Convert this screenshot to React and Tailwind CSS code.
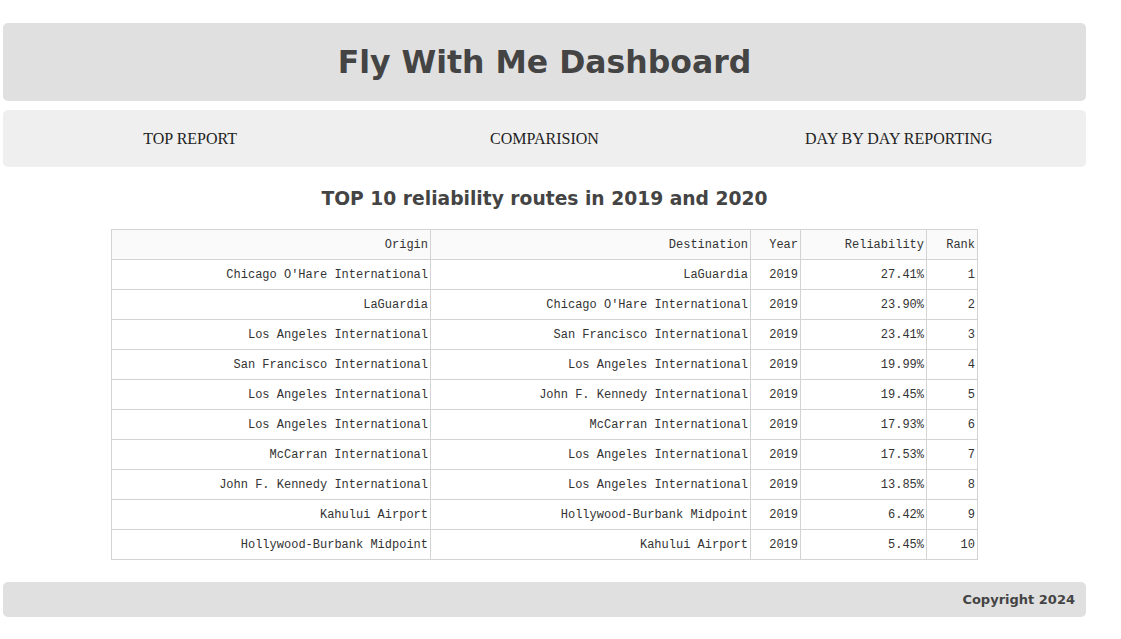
import React from "react";

const rows = [
  ["Chicago O'Hare International", "LaGuardia", "2019", "27.41%", "1"],
  ["LaGuardia", "Chicago O'Hare International", "2019", "23.90%", "2"],
  ["Los Angeles International", "San Francisco International", "2019", "23.41%", "3"],
  ["San Francisco International", "Los Angeles International", "2019", "19.99%", "4"],
  ["Los Angeles International", "John F. Kennedy International", "2019", "19.45%", "5"],
  ["Los Angeles International", "McCarran International", "2019", "17.93%", "6"],
  ["McCarran International", "Los Angeles International", "2019", "17.53%", "7"],
  ["John F. Kennedy International", "Los Angeles International", "2019", "13.85%", "8"],
  ["Kahului Airport", "Hollywood-Burbank Midpoint", "2019", "6.42%", "9"],
  ["Hollywood-Burbank Midpoint", "Kahului Airport", "2019", "5.45%", "10"],
];

const cols = [
  { name: "Origin", w: "w-[319px]" },
  { name: "Destination", w: "w-[320px]" },
  { name: "Year", w: "w-[50px]" },
  { name: "Reliability", w: "w-[126px]" },
  { name: "Rank", w: "w-[51px]" },
];

export default function App() {
  return (
    <div className="bg-white min-h-[639px] pt-[23px] font-['DejaVu_Sans',Verdana,sans-serif]">
      <div className="ml-[3px] w-[1083px]">
        <div className="h-[78px] bg-[#e0e0e0] rounded-[5px] flex items-center justify-center pt-[2px]">
          <h1 className="text-[31.5px] font-bold text-[#444]">Fly With Me Dashboard</h1>
        </div>

        <div className="mt-[9px] h-[57px] bg-[#efefef] rounded-[5px] px-[10px] grid grid-cols-3 items-center font-['Liberation_Serif',serif] text-[16px] text-[#222]">
          <span className="text-center">TOP REPORT</span>
          <span className="text-center">COMPARISION</span>
          <span className="text-center">DAY BY DAY REPORTING</span>
        </div>

        <h2 className="mt-[19px] text-center text-[18.7px] font-bold text-[#444] leading-[26px]">
          TOP 10 reliability routes in 2019 and 2020
        </h2>

        <div className="mt-[17px]">
          <table className="ml-[108px] table-fixed border-collapse font-['Liberation_Mono',monospace] text-[12px] text-[#333]">
            <thead>
              <tr className="bg-[#fafafa]">
                {cols.map((c) => (
                  <th key={c.name} className={`${c.w} h-[30px] border border-[#d3d3d3] px-[2px] pt-[1px] text-right font-normal`}>
                    {c.name}
                  </th>
                ))}
              </tr>
            </thead>
            <tbody>
              {rows.map((r) => (
                <tr key={r[4]}>
                  {r.map((v, i) => (
                    <td key={i} className="h-[30px] border border-[#d3d3d3] px-[2px] pt-[1px] text-right">
                      {v}
                    </td>
                  ))}
                </tr>
              ))}
            </tbody>
          </table>
        </div>

        <div className="mt-[22px] h-[35px] bg-[#e0e0e0] rounded-[5px] flex items-center justify-end pr-[11px] pt-[1px]">
          <span className="text-[13px] font-bold text-[#444]">Copyright 2024</span>
        </div>
      </div>
    </div>
  );
}
